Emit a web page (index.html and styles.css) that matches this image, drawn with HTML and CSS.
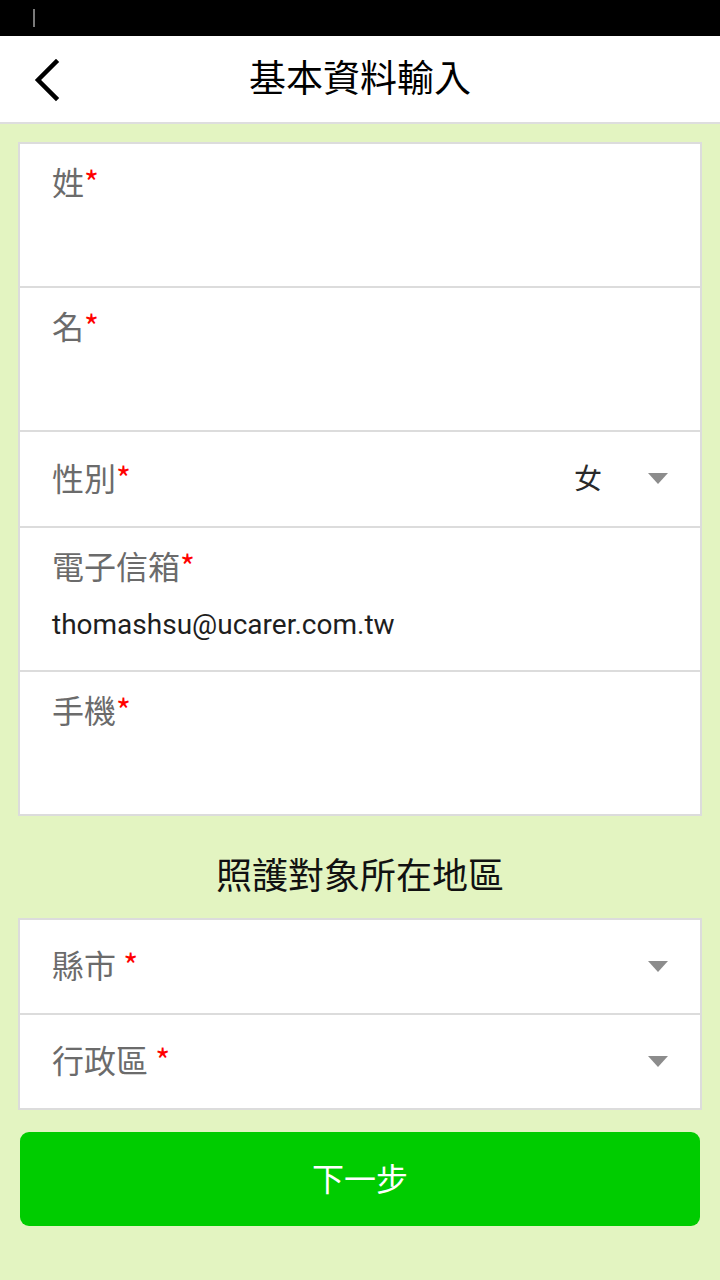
FILE: index.html
```html
<!DOCTYPE html>
<html lang="zh-Hant">
<head>
<meta charset="utf-8">
<title>基本資料輸入</title>
<link rel="stylesheet" href="styles.css">
</head>
<body>
<div class="status-bar"><span class="status-mark"></span></div>
<header class="app-header">
  <button class="back-btn" aria-label="返回">
    <svg width="30" height="44" viewBox="0 0 30 44"><path d="M24 4 L6 22 L24 40" fill="none" stroke="#000" stroke-width="4.5" stroke-linecap="square" stroke-linejoin="miter"/></svg>
  </button>
  <h1 class="app-title">基本資料輸入</h1>
</header>
<main class="content">
  <section class="card">
    <div class="field field-tall">
      <div class="label">姓<span class="req">*</span></div>
    </div>
    <div class="field field-tall">
      <div class="label">名<span class="req">*</span></div>
    </div>
    <div class="field field-select">
      <div class="label">性別<span class="req">*</span></div>
      <div class="select-value">女</div>
      <span class="caret"></span>
    </div>
    <div class="field field-tall">
      <div class="label">電子信箱<span class="req">*</span></div>
      <div class="value">thomashsu@ucarer.com.tw</div>
    </div>
    <div class="field field-tall">
      <div class="label">手機<span class="req">*</span></div>
    </div>
  </section>
  <h2 class="section-title">照護對象所在地區</h2>
  <section class="card">
    <div class="field field-select field-region">
      <div class="label">縣市 <span class="req">*</span></div>
      <span class="caret"></span>
    </div>
    <div class="field field-select field-region">
      <div class="label">行政區 <span class="req">*</span></div>
      <span class="caret"></span>
    </div>
  </section>
  <button class="next-btn">下一步</button>
</main>
</body>
</html>
```
FILE: styles.css
```css
html, body {
  margin: 0;
  padding: 0;
}
body {
  width: 720px;
  min-height: 1280px;
  background: #e3f4c1;
  font-family: "Noto Sans CJK TC", "Noto Sans", sans-serif;
}
.status-bar {
  height: 36px;
  background: #000;
  position: relative;
}
.status-mark {
  position: absolute;
  left: 33px;
  top: 9px;
  width: 2px;
  height: 18px;
  background: #7a7a7a;
}
.app-header {
  height: 86px;
  background: #fff;
  border-bottom: 2px solid #dedede;
  display: flex;
  align-items: center;
  justify-content: center;
  position: relative;
}
.back-btn {
  position: absolute;
  left: 32px;
  top: 22px;
  width: 30px;
  height: 44px;
  padding: 0;
  border: 0;
  background: none;
  display: flex;
}
.app-title {
  margin: 0 0 6px;
  font-size: 37px;
  font-weight: 400;
  line-height: 48px;
  color: #000;
}
.content {
  padding: 18px 18px 40px;
  display: flex;
  flex-direction: column;
}
.card {
  background: #fff;
  border: 2px solid #dcdcdc;
  display: flex;
  flex-direction: column;
}
.field {
  border-top: 2px solid #dcdcdc;
  padding: 0 32px;
  box-sizing: border-box;
}
.field:first-child {
  border-top: 0;
}
.field-tall {
  height: 142px;
  padding-top: 17px;
}
.field:not(:first-child).field-tall {
  height: 144px;
}
.field-select {
  height: 96px;
  display: flex;
  align-items: center;
  padding-bottom: 5px;
}
.field-region {
  height: 95px;
}
.field-region:first-child {
  height: 93px;
}
.label {
  font-size: 32px;
  line-height: 40px;
  color: #6b6b6b;
}
.req {
  color: #ff0000;
}
.value {
  margin-top: 22px;
  font-family: Roboto, "Noto Sans", sans-serif;
  font-size: 28px;
  line-height: 36px;
  color: #1e1e1e;
}
.select-value {
  margin-left: auto;
  font-size: 28px;
  line-height: 36px;
  color: #2a2a2a;
}
.caret {
  width: 0;
  height: 0;
  border-left: 10px solid transparent;
  border-right: 10px solid transparent;
  border-top: 11px solid #8c8c8c;
  margin-left: 46px;
  position: relative;
  top: 2px;
}
.field-region .caret {
  margin-left: auto;
}
.section-title {
  margin: 33px 0 21px;
  text-align: center;
  font-size: 36px;
  font-weight: 400;
  line-height: 48px;
  color: #111;
}
.next-btn {
  margin: 22px 2px 0;
  height: 94px;
  border: 0;
  border-radius: 9px;
  background: #00cc00;
  color: #fff;
  font-family: "Noto Sans CJK TC", "Noto Sans", sans-serif;
  font-size: 32px;
  line-height: 40px;
  padding: 0 0 4px;
}
```
